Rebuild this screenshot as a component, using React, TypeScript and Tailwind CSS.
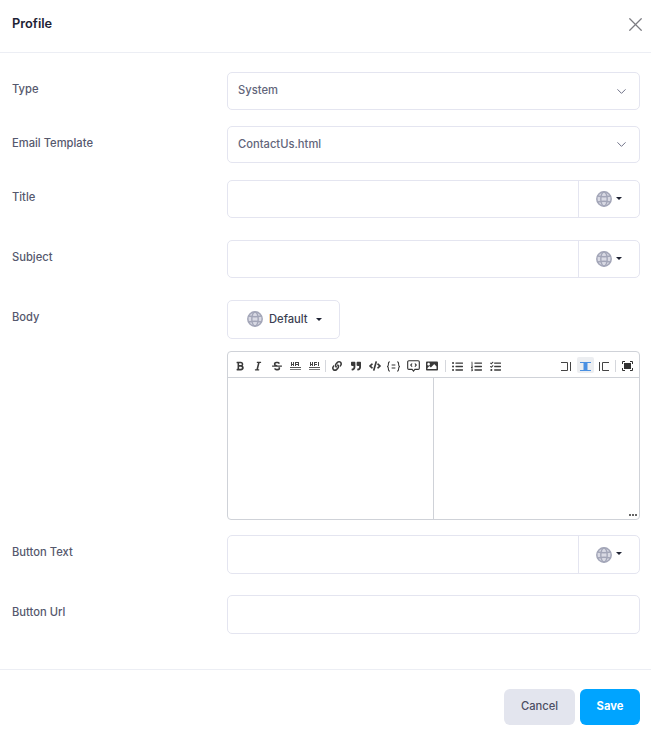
import { FaBold, FaItalic, FaStrikethrough, FaLink, FaQuoteRight, FaCode, FaImage, FaListUl, FaListOl, FaTasks } from "react-icons/fa";
import { ChevronDown, X } from "lucide-react";

const font = { fontFamily: "Inter, sans-serif" };

function Globe() {
  return (
    <svg width="16" height="16" viewBox="0 0 16 16" fill="none" stroke="#a3a6b8" strokeWidth="1.4" className="shrink-0">
      <circle cx="8" cy="8" r="7.2" fill="#d9dae4" strokeWidth="1.5" />
      <ellipse cx="8" cy="8" rx="3.2" ry="7" />
      <path d="M1.500 5q6.500 1.500 13 0M1.500 11q6.500-1.500 13 0" />
    </svg>
  );
}

function Caret() {
  return <span className="inline-block w-0 h-0 border-l-[3px] border-r-[3px] border-t-[3px] border-l-transparent border-r-transparent border-t-[#1f2333]" />;
}

function Label({ children }: { children: string }) {
  return <div className="w-[215px] shrink-0 pt-[9px] text-[11.2px] font-medium leading-[16px] text-[#55586d]">{children}</div>;
}

function SelectRow({ label, value, h, mb }: { label: string; value: string; h: string; mb: string }) {
  return (
    <div className={`flex ${mb}`}>
      <Label>{label}</Label>
      <div className={`flex-1 ${h} flex items-center justify-between pl-[10px] pr-[10px] pb-[1px] border border-[#e4e5f0] rounded-[5px] text-[11.2px] font-medium text-[#62657a]`}>
        <span>{value}</span>
        <ChevronDown size={15} color="#6f7288" strokeWidth={1.6} className="mt-[1px]" />
      </div>
    </div>
  );
}

function LangRow({ label, mb, h }: { label: string; mb: string; h: string }) {
  return (
    <div className={`flex ${mb}`}>
      <Label>{label}</Label>
      <div className={`flex-1 ${h} flex border border-[#e4e5f0] rounded-[5px]`}>
        <div className="flex-1" />
        <div className="w-[61px] border-l border-[#e4e5f0] flex items-center justify-center gap-[4px]">
          <Globe />
          <span className="mb-[2px] flex"><Caret /></span>
        </div>
      </div>
    </div>
  );
}

function Rule({ wide }: { wide?: boolean }) {
  return (
    <svg width="11" height="9" viewBox="0 0 11 9" fill="#444">
      <rect x="1" y="0" width="1" height="4" />
      <rect x="3" y="0" width="1" height="4" />
      <rect x="1" y="2" width="3" height="1" />
      <rect x="5" y="0" width="1" height="4" />
      <rect x="6" y="0" width="2" height="1" />
      <rect x="6" y="2" width="2" height="1" />
      <rect x={wide ? 9 : 8} y="0" width="1" height="4" />
      <rect x="0" y="5" width="11" height="1" fill="#555" />
      <rect x="0" y="7" width="11" height="1" fill="#777" />
    </svg>
  );
}

function Braces() {
  return (
    <svg width="13" height="11" viewBox="0 0 14 11" fill="none" stroke="#333" strokeWidth="1.100">
      <path d="M3 .5C1.500 .5 1.500 1.500 1.500 3S1.300 5 .5 5.500C1.300 6 1.500 6.500 1.500 8S1.500 10.500 3 10.500M11 .5C12.500 .5 12.500 1.500 12.500 3S12.700 5 13.500 5.500C12.700 6 12.500 6.500 12.500 8S12.500 10.500 11 10.500M5 4h4M5 7h4" />
    </svg>
  );
}

function Comment() {
  return (
    <svg width="13" height="12" viewBox="0 0 14 13" fill="none" stroke="#333" strokeWidth="1.200">
      <path d="M2 .8h10A1.300 1.300 0 0 1 13.300 2.100v6.800A1.300 1.300 0 0 1 12 10.200H8.500L7 12 5.500 10.200H2A1.300 1.300 0 0 1 .7 8.900V2.100A1.300 1.300 0 0 1 2 .8z" />
      <path d="M5.500 3.800L4 5.500 5.500 7.200M8.500 3.800L10 5.500 8.500 7.200" />
    </svg>
  );
}

function Column({ kind }: { kind: "left" | "mid" | "right" }) {
  const color = kind === "mid" ? "#4a90e2" : "#444";
  return (
    <svg width="11" height="9" viewBox="0 0 11 9" fill="none" stroke={color} strokeWidth="1">
      {kind === "left" && <path d="M0 .5h6.500v8H0M9.500 0v9" />}
      {kind === "mid" && <path d="M0 .5h11M0 8.500h11" />}
      {kind === "mid" && <rect x="4" y=".5" width="3" height="8" fill={color} />}
      {kind === "right" && <path d="M11 .5H4.500v8H11M1.500 0v9" />}
    </svg>
  );
}

function Focus() {
  return (
    <svg width="11" height="10" viewBox="0 0 11 10" fill="none" stroke="#333" strokeWidth="1">
      <path d="M.5 3V.5H3M8 .5h2.500V3M.5 7v2.500H3M8 9.500h2.500V7" />
      <rect x="2.500" y="2.500" width="6" height="5" fill="#333" />
    </svg>
  );
}

function Tool({ children, active }: { children: React.ReactNode; active?: boolean }) {
  return <span className={`w-[17px] h-[16px] mx-[0.9px] pt-[2px] box-border flex items-center justify-center rounded-[2px] ${active ? "bg-[#eceef1]" : ""}`}>{children}</span>;
}

function Sep({ wide, right }: { wide?: boolean; right?: boolean }) {
  return <span className={`w-px h-[12px] mt-[3px] bg-[#d5d7dc] ${wide ? "mx-[3px]" : right ? "mx-[2px]" : "mx-[1.5px]"}`} />;
}

const ic = 10;

function Editor() {
  return (
    <div className="h-[169px] flex flex-col border border-[#cfd2d8] rounded-[4px] mb-[15px]">
      <div className="h-[26px] shrink-0 flex items-start pt-[5px] pl-[3px] pr-[2px] border-b border-[#cfd2d8] text-[#3a3a3a]">
        <Tool><FaBold size={ic} /></Tool>
        <span className="-ml-[1px] flex"><Tool><FaItalic size={ic} /></Tool></span>
        <Tool><FaStrikethrough size={ic} /></Tool>
        <Tool><Rule /></Tool>
        <Tool><Rule wide /></Tool>
        <Sep />
        <Tool><FaLink size={ic} /></Tool>
        <Tool><FaQuoteRight size={ic} /></Tool>
        <Tool><FaCode size={12} /></Tool>
        <Tool><Braces /></Tool>
        <span className="ml-[1px] flex"><Tool><Comment /></Tool></span>
        <Tool><FaImage size={12} /></Tool>
        <Sep wide />
        <Tool><FaListUl size={11} /></Tool>
        <Tool><FaListOl size={11} /></Tool>
        <Tool><FaTasks size={11} /></Tool>
        <div className="flex-1" />
        <Tool><Column kind="left" /></Tool>
        <Tool active><Column kind="mid" /></Tool>
        <Tool><Column kind="right" /></Tool>
        <Sep right />
        <Tool><Focus /></Tool>
      </div>
      <div className="flex-1 flex relative">
        <div className="flex-1 border-r border-[#cfd2d8]" />
        <div className="flex-1" />
        <span className="absolute right-[2px] bottom-[3px] flex gap-[1px]">
          <i className="w-[2px] h-[2px] bg-[#666]" />
          <i className="w-[2px] h-[2px] bg-[#666]" />
          <i className="w-[2px] h-[2px] bg-[#666]" />
        </span>
      </div>
    </div>
  );
}

export default function App() {
  return (
    <div style={font} className="w-[651px] h-[737px] bg-white flex flex-col overflow-hidden">
      <header className="h-[53px] shrink-0 flex items-center justify-between pl-3 pr-[4px] pb-[4px] border-b border-[#eceef4]">
        <h1 className="text-[12.8px] font-semibold text-[#1e2235]">Profile</h1>
        <span className="flex"><X size={23} color="#7c7c82" strokeWidth={1.300} /></span>
      </header>
      <main className="flex-1 pt-[19px] pl-3 pr-[11px]">
        <SelectRow label="Type" value="System" h="h-[38px]" mb="mb-[16px]" />
        <SelectRow label="Email Template" value="ContactUs.html" h="h-[37px]" mb="mb-[17px]" />
        <LangRow label="Title" mb="mb-[22px]" h="h-[38px]" />
        <LangRow label="Subject" mb="mb-[22px]" h="h-[38px]" />
        <div className="flex">
          <Label>Body</Label>
          <div className="flex-1">
            <div className="w-[113px] h-[39px] mb-[12px] pb-[1px] pl-[19px] flex items-center border border-[#e4e5f0] rounded-[5px] text-[11.2px] font-medium text-[#3c3f52]">
              <Globe />
              <span className="ml-[6px] w-[47px]">Default</span>
              <Caret />
            </div>
            <Editor />
          </div>
        </div>
        <LangRow label="Button Text" mb="mb-[21px]" h="h-[39px]" />
        <div className="flex">
          <Label>Button Url</Label>
          <div className="flex-1 h-[39px] border border-[#e4e5f0] rounded-[5px]" />
        </div>
      </main>
      <footer className="h-[68px] shrink-0 border-t border-[#eceef4] flex justify-end gap-[5px] pt-[19px] pr-[11px]">
        <button className="w-[71px] h-[36px] pb-[2px] rounded-[6px] bg-[#e3e5ee] text-[11.2px] font-medium text-[#4b4e63]">Cancel</button>
        <button className="w-[60px] h-[36px] pb-[2px] rounded-[6px] bg-[#00a4ff] text-[11.2px] font-bold text-white">Save</button>
      </footer>
    </div>
  );
}
